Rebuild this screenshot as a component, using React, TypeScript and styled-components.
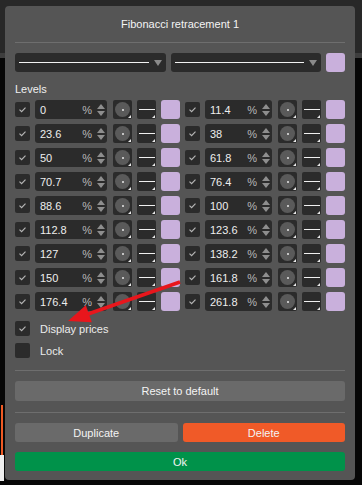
import React from "react";
import styled, { createGlobalStyle } from "styled-components";

const GlobalStyle = createGlobalStyle`
  html, body { margin: 0; padding: 0; background: #262626; }
  body { font-family: "Liberation Sans", Arial, sans-serif; }
  * { box-sizing: border-box; }
`;

const Page = styled.div`
  position: relative;
  width: 362px;
  height: 485px;
  overflow: hidden;
  background: #282828;
  padding: 6px 7px 0 5px;
`;

const ChartArea = styled.div`
  position: absolute;
  left: 0;
  right: 0;
  top: 53px;
  bottom: 0;
  background: #070707;
  border-top: 5px solid #3e3e3e;
`;

const OrangeMark = styled.div`
  position: absolute;
  left: 1px;
  top: 405px;
  width: 2px;
  height: 50px;
  background: #f05a24;
`;

const PriceTag = styled.div`
  position: absolute;
  left: 0;
  top: 455px;
  width: 4px;
  height: 26px;
  background: #eeeeee;
`;

const Dialog = styled.div`
  position: relative;
  z-index: 1;
  width: 350px;
  height: 474px;
  background: #555555;
  border-radius: 4px;
  padding: 0 10px 9px;
  display: flex;
  flex-direction: column;
  color: #eeeeee;
  font-size: 11px;
`;

const Header = styled.div`
  height: 37px;
  display: flex;
  align-items: center;
  justify-content: center;
  border-bottom: 1px solid #6e6e6e;
  color: #f4f4f4;
  font-size: 11px;
  line-height: 14px;
  padding-bottom: 1px;
`;

const StyleRow = styled.div`
  margin-top: 10px;
  display: flex;
  gap: 5px;
  height: 19px;
`;

const Select = styled.div<{ $w: number }>`
  width: ${(p) => p.$w}px;
  height: 19px;
  background: #2b2b2b;
  border-radius: 3px;
  display: flex;
  align-items: center;
  padding: 0 4px;
  gap: 5px;
`;

const SelectLine = styled.div`
  flex: 1;
  height: 1px;
  background: #f2f2f2;
`;

const Caret = styled.div`
  width: 0;
  height: 0;
  border-left: 4px solid transparent;
  border-right: 4px solid transparent;
  border-top: 6px solid #8a8a8a;
`;

const Swatch = styled.div`
  width: 19px;
  height: 19px;
  flex: none;
  border-radius: 3px;
  background: #c9b0dc;
`;

const SectionLabel = styled.div`
  margin-top: 10px;
  line-height: 14px;
  color: #f0f0f0;
`;

const LevelGrid = styled.div`
  margin-top: 4px;
  display: grid;
  grid-template-columns: 165px 160px;
  column-gap: 5px;
`;

const LevelColumn = styled.div`
  display: flex;
  flex-direction: column;
  gap: 5px;
`;

const LevelRow = styled.div`
  display: flex;
  align-items: center;
  height: 19px;
`;

const CheckBox = styled.div`
  width: 15px;
  height: 15px;
  flex: none;
  background: #2b2b2b;
  border-radius: 2px;
  display: flex;
  align-items: center;
  justify-content: center;
`;

const NumInput = styled.div`
  flex: 1;
  margin-left: 5px;
  margin-right: 6px;
  height: 19px;
  background: #2b2b2b;
  border-radius: 3px;
  display: flex;
  align-items: center;
  padding: 0 2px 0 5px;
`;

const NumValue = styled.span`
  flex: 1;
  color: #eeeeee;
  font-size: 11px;
`;

const Percent = styled.span`
  color: #b8b8b8;
  font-size: 11px;
  margin-right: 5px;
`;

const Spinner = styled.div`
  display: flex;
  flex-direction: column;
  gap: 2px;
`;

const ArrowUp = styled.div`
  width: 0;
  height: 0;
  border-left: 4px solid transparent;
  border-right: 4px solid transparent;
  border-bottom: 5px solid #8e8e8e;
`;

const ArrowDown = styled.div`
  width: 0;
  height: 0;
  border-left: 4px solid transparent;
  border-right: 4px solid transparent;
  border-top: 5px solid #8e8e8e;
`;

const ToolButton = styled.div`
  position: relative;
  width: 19px;
  height: 19px;
  flex: none;
  margin-right: 5px;
  background: #2b2b2b;
  border-radius: 2px;
  display: flex;
  align-items: center;
  justify-content: center;
  &::after {
    content: "";
    position: absolute;
    right: 1px;
    bottom: 1px;
    width: 0;
    height: 0;
    border-left: 3px solid transparent;
    border-bottom: 3px solid #e8e8e8;
  }
`;

const DotCircle = styled.div`
  width: 15px;
  height: 15px;
  border-radius: 50%;
  background: #5a5a5a;
  display: flex;
  align-items: center;
  justify-content: center;
  &::before {
    content: "";
    width: 2px;
    height: 2px;
    border-radius: 50%;
    background: #e8e8e8;
  }
`;

const WidthLine = styled.div`
  width: 16px;
  height: 1px;
  background: #f0f0f0;
`;

const Options = styled.div`
  margin-top: 10px;
  display: flex;
  flex-direction: column;
  gap: 7px;
`;

const OptionRow = styled.div`
  display: flex;
  align-items: center;
  gap: 10px;
  height: 15px;
  color: #ececec;
`;

const Divider = styled.div<{ $top: number }>`
  margin-top: ${(p) => p.$top}px;
  height: 1px;
  background: #6e6e6e;
`;

const Button = styled.div<{ $tone: "gray" | "orange" | "green"; $h: number; $top: number; $grow?: boolean }>`
  margin-top: ${(p) => p.$top}px;
  height: ${(p) => p.$h}px;
  flex: ${(p) => (p.$grow ? "1" : "none")};
  border-radius: 3px;
  display: flex;
  align-items: center;
  justify-content: center;
  color: #f4f4f4;
  font-size: 11px;
  background: ${(p) =>
    p.$tone === "orange" ? "#f05a28" : p.$tone === "green" ? "#00924a" : "#6a6a6a"};
`;

const ButtonRow = styled.div`
  margin-top: 10px;
  display: flex;
  gap: 5px;
`;

const Annotation = styled.svg`
  position: absolute;
  left: 0;
  top: 0;
  z-index: 2;
  pointer-events: none;
`;

const Check = () => (
  <svg width="15" height="15" viewBox="0 0 15 15">
    <path d="M4.5 7.6 L6.6 9.6 L10.5 5.6" fill="none" stroke="#b5b5b5" strokeWidth="1.2" />
  </svg>
);

const leftLevels = ["0", "23.6", "50", "70.7", "88.6", "112.8", "127", "150", "176.4"];
const rightLevels = ["11.4", "38", "61.8", "76.4", "100", "123.6", "138.2", "161.8", "261.8"];

const Level = ({ value }: { value: string }) => (
  <LevelRow>
    <CheckBox>
      <Check />
    </CheckBox>
    <NumInput>
      <NumValue>{value}</NumValue>
      <Percent>%</Percent>
      <Spinner>
        <ArrowUp />
        <ArrowDown />
      </Spinner>
    </NumInput>
    <ToolButton>
      <DotCircle />
    </ToolButton>
    <ToolButton>
      <WidthLine />
    </ToolButton>
    <Swatch />
  </LevelRow>
);

export default function App() {
  return (
    <>
      <GlobalStyle />
      <Page>
        <ChartArea />
        <OrangeMark />
        <PriceTag />
        <Dialog>
          <Header>Fibonacci retracement 1</Header>
          <StyleRow>
            <Select $w={151}>
              <SelectLine />
              <Caret />
            </Select>
            <Select $w={150}>
              <SelectLine />
              <Caret />
            </Select>
            <Swatch />
          </StyleRow>
          <SectionLabel>Levels</SectionLabel>
          <LevelGrid>
            <LevelColumn>
              {leftLevels.map((v) => (
                <Level key={v} value={v} />
              ))}
            </LevelColumn>
            <LevelColumn>
              {rightLevels.map((v) => (
                <Level key={v} value={v} />
              ))}
            </LevelColumn>
          </LevelGrid>
          <Options>
            <OptionRow>
              <CheckBox>
                <Check />
              </CheckBox>
              Display prices
            </OptionRow>
            <OptionRow>
              <CheckBox />
              Lock
            </OptionRow>
          </Options>
          <Divider $top={12} />
          <Button $tone="gray" $h={20} $top={10}>
            Reset to default
          </Button>
          <Divider $top={11} />
          <ButtonRow>
            <Button $tone="gray" $h={19} $top={0} $grow>
              Duplicate
            </Button>
            <Button $tone="orange" $h={19} $top={0} $grow>
              Delete
            </Button>
          </ButtonRow>
          <Button $tone="green" $h={19} $top={10}>
            Ok
          </Button>
        </Dialog>
        <Annotation width="362" height="485" viewBox="0 0 362 485">
          <line x1="180" y1="282" x2="88" y2="314" stroke="#e8161c" strokeWidth="3.5" />
          <polygon points="68,321 85.8,305.3 91.8,322.3" fill="#e8161c" />
        </Annotation>
      </Page>
    </>
  );
}
